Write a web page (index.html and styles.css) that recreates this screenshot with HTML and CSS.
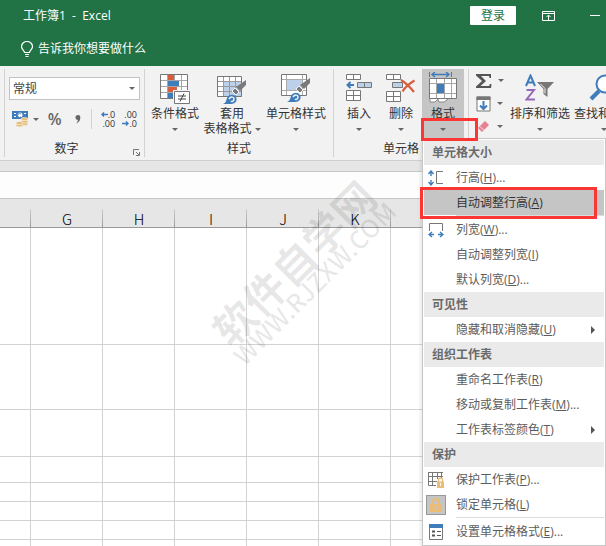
FILE: index.html
```html
<!DOCTYPE html>
<html lang="zh-CN">
<head>
<meta charset="utf-8">
<meta name="viewport" content="width=device-width, initial-scale=1">
<title>工作簿1 - Excel</title>
<link rel="stylesheet" href="styles.css">
</head>
<body>
<svg class="defs" width="0" height="0" aria-hidden="true">
  <symbol id="brush" viewBox="0 0 30 30">
    <path d="M29 6v5l-6 6-4-4z" fill="#7a7a7a"/>
    <path d="M18 14l4 4-3 3-4-4z" fill="#7a7a7a" stroke="#f2f2f2"/>
    <path d="M6 30c3-1 3-3 4-6 2-4 7-4 9-1 2 4-1 7-5 7z" fill="#3f7cba"/>
    <path d="M12 25c2-3 5-2 5 0s-2 3-3 2" fill="none" stroke="#f2f2f2" stroke-width="1.500"/>
  </symbol>
</svg>
<div class="app">
  <header class="top">
    <div class="titlebar">
      <span class="title">工作簿1  -  Excel</span>
      <button class="login" type="button">登录</button>
      <button class="win" type="button" aria-label="功能区显示选项">
        <svg width="13" height="10" viewBox="0 0 13 10" fill="none" stroke="#fff"><path d="M.5.500h12v9H.5zM0 2.500h13M6.500 9V4.500M4.500 6l2-2 2 2"/></svg>
      </button>
      <button class="win" type="button" aria-label="最小化">
        <svg width="10" height="10" viewBox="0 0 10 10" stroke="#fff"><path d="M0 4.500h10"/></svg>
      </button>
    </div>
    <button class="tell" type="button">
      <svg width="12" height="16" viewBox="0 0 12 16" fill="none" stroke="#fff" stroke-width="1.200"><path d="M3.500 11.500c0-2-3-3-3-6a5.500 5 0 0 1 11 0c0 3-3 4-3 6zM4 13.500h4M4.500 15.500h3"/></svg>
      告诉我你想要做什么
    </button>
  </header>

  <div class="ribbon">
    <section class="group number">
      <div class="body">
        <div class="combo">
          <select aria-label="数字格式"><option>常规</option></select>
          <i class="caret"></i>
        </div>
        <div class="tools">
          <button type="button" class="tool money" aria-label="会计数字格式">
            <svg width="16" height="16" viewBox="0 0 16 16"><path d="M0 0h16v8H0z" fill="#3f7cba"/><path d="M2 2h2v1h-2zM12 2h2v1h-2zM2 5h2v1h-2z" fill="#fff"/><circle cx="8" cy="4" r="2.500" fill="#fff"/><path d="M9 3a2 2 0 1 0 0 3" fill="none" stroke="#3f7cba"/><g fill="#e9bd78" stroke="#f2f2f2" stroke-width=".6"><ellipse cx="12.500" cy="13" rx="3.500" ry="1.600"/><ellipse cx="12.500" cy="10.500" rx="3.500" ry="1.600"/><ellipse cx="12.500" cy="8" rx="3.500" ry="1.600"/><ellipse cx="7.500" cy="14.300" rx="3.500" ry="1.600"/><ellipse cx="7.500" cy="12" rx="3.500" ry="1.600"/></g></svg>
            <i class="caret"></i>
          </button>
          <button type="button" class="tool percent">%</button>
          <button type="button" class="tool comma" aria-label="千位分隔样式">
            <svg width="6" height="9" viewBox="0 0 6 9"><path d="M3 0a2.300 2.300 0 0 1 2.300 2.500C5.300 5.500 4 7.500 1 8.500c1-1 1.800-2 1.800-3.500A2.400 2.400 0 0 1 3 0z" fill="#666"/></svg>
          </button>
          <span class="split"></span>
          <button type="button" class="tool decimal" aria-label="增加小数位数">
            <span class="d"><svg width="7" height="5" viewBox="0 0 7 5" fill="none" stroke="#3f7cba" stroke-width="1.500"><path d="M7 2.500H1M3 .5l-2 2 2 2"/></svg>.0</span><span class="d">.00</span>
          </button>
          <button type="button" class="tool decimal" aria-label="减少小数位数">
            <span class="d">.00</span><span class="d"><svg width="7" height="5" viewBox="0 0 7 5" fill="none" stroke="#3f7cba" stroke-width="1.500"><path d="M0 2.500h6M4 .5l2 2-2 2"/></svg>.0</span>
          </button>
        </div>
      </div>
      <h2>数字</h2>
      <button type="button" class="launcher" aria-label="数字设置">
        <svg width="7" height="7" viewBox="0 0 7 7" fill="none" stroke="#777"><path d="M.5 6V.5H6M3 3l3 3M6.500 3v3.500H3"/></svg>
      </button>
    </section>

    <section class="group styles">
      <div class="body">
        <button type="button" class="big">
          <svg width="30" height="30" viewBox="0 0 30 30"><path d="M.5.500h27v24H.5z" fill="#fff"/><path d="M7.500 0v24M14.500 0v24M21.500 0v24M0 6.500h28M0 12.500h28M0 18.500h28" stroke="#a6a6a6"/><path d="M.5.500h27v24H.5z" fill="none" stroke="#777"/><path d="M8 1h6v5H8zM8 13h9v5H8z" fill="#d65f3d"/><path d="M8 7h11v5H8zM8 19h5v5H8z" fill="#3f7cba"/><path d="M13 16h17v14H13z" fill="#f2f2f2"/><path d="M14.500 17.500h15v12h-15z" fill="#fff" stroke="#777"/><path d="M18 22h8M18 25h8M24 19.500l-4 8" stroke="#444" fill="none"/></svg>
          <span>条件格式</span><span><i class="caret"></i></span>
        </button>
        <button type="button" class="big wide">
          <svg width="30" height="30" viewBox="0 0 30 30"><path d="M.5 2.500h24v20H.5z" fill="#fff"/><path d="M7 8h18v15H7z" fill="#bdd0e9"/><path d="M6.500 2v20M12.500 2v20M18.500 2v20M0 7.500h25M0 12.500h25M0 17.500h25" stroke="#999"/><path d="M.5 2.500h24v20H.5z" fill="none" stroke="#777"/><use href="#brush" width="30" height="30"/></svg>
          <span>套用</span><span>表格格式 <i class="caret"></i></span>
        </button>
        <button type="button" class="big wide">
          <svg width="30" height="30" viewBox="0 0 30 30"><path d="M.5.500h25v21H.5z" fill="#fff"/><path d="M6 6h15v10H6z" fill="#bdd0e9"/><path d="M5.500 0v21M21.500 0v21M0 5.500h25M0 16.500h25" stroke="#aaa"/><path d="M.5.500h25v21H.5z" fill="none" stroke="#777"/><use href="#brush" y="-2" width="30" height="30"/></svg>
          <span>单元格样式</span><span><i class="caret"></i></span>
        </button>
      </div>
      <h2>样式</h2>
    </section>

    <section class="group cells">
      <div class="body">
        <button type="button" class="big">
          <svg width="26" height="30" viewBox="0 0 26 30" fill="#fff" stroke="#777"><path d="M.5.500h14v5H.5zM7.500.500v5M.5 16.500h14v10H.5zM7.500 16.500v10M.5 21.500h14"/><path d="M11.500 8.500h14v5h-14zM18.500 8.500v5" fill="#bdd0e9"/><path d="M8 11H2M4.500 8L1.500 11l3 3" fill="none" stroke="#3f7cba" stroke-width="2"/></svg>
          <span>插入</span><span><i class="caret"></i></span>
        </button>
        <button type="button" class="big">
          <svg width="30" height="30" viewBox="0 0 30 30" fill="#fff" stroke="#777"><path d="M.5.500h14v5H.5zM7.500.500v5M.5 17.500h14v10H.5zM7.500 17.500v10M.5 22.500h14"/><path d="M6.500 8.500h10v5h-10z" fill="#bdd0e9"/><path d="M15 6c5 3 9 7 13 12M28.500 6.500c-5 3-9 6-12 11" fill="none" stroke="#d65f3d" stroke-width="2.200"/></svg>
          <span>删除</span><span><i class="caret"></i></span>
        </button>
        <div class="drop">
          <button type="button" class="big open" aria-expanded="true">
            <svg width="28" height="32" viewBox="0 0 28 32"><path d="M.5 0v5M22.500 0v5" stroke="#3f7cba"/><path d="M3 2.500h17M6 0L3 2.500 6 5M17 0l3 2.500L17 5" fill="none" stroke="#3f7cba" stroke-width="1.400"/><path d="M.5 6.500h27v20H.5z" fill="#fff"/><path d="M7.500 6v20M15.500 6v20M22.500 6v20M0 11.500h28M0 21.500h28" stroke="#a6a6a6"/><path d="M.5 6.500h27v20H.5z" fill="none" stroke="#777"/><path d="M8 12h7v9H8z" fill="#3f7cba"/><path d="M1 27v3h5l3-3 1 3h5l4-3" fill="#fff" stroke="#888"/></svg>
            <span>格式</span><span><i class="caret"></i></span>
          </button>
          <div class="menu" role="menu">
            <h3>单元格大小</h3>
            <button type="button" role="menuitem" class="item"><span class="ico"><svg width="16" height="16" viewBox="0 0 16 16" fill="none"><path d="M3 1v5M.5 4L3 1l2.500 3M3 15v-5M.5 12L3 15l2.500-3" stroke="#3f7cba" stroke-width="1.400"/><path d="M15 1.500H8.500v12H15" stroke="#777"/></svg></span>行高(<u>H</u>)...</button>
            <button type="button" role="menuitem" class="item active">自动调整行高(<u>A</u>)<span class="mark mark-row"></span></button>
            <hr>
            <button type="button" role="menuitem" class="item"><span class="ico"><svg width="16" height="16" viewBox="0 0 16 16" fill="none"><path d="M1.500 9V1.500h13V9" stroke="#777"/><path d="M1 12.500h5M4 10l-3 2.500L4 15M15 12.500h-5M12 10l3 2.500-3 2.500" stroke="#3f7cba" stroke-width="1.400"/></svg></span>列宽(<u>W</u>)...</button>
            <button type="button" role="menuitem" class="item">自动调整列宽(<u>I</u>)</button>
            <button type="button" role="menuitem" class="item">默认列宽(<u>D</u>)...</button>
            <h3>可见性</h3>
            <button type="button" role="menuitem" class="item sub">隐藏和取消隐藏(<u>U</u>)</button>
            <h3>组织工作表</h3>
            <button type="button" role="menuitem" class="item">重命名工作表(<u>R</u>)</button>
            <button type="button" role="menuitem" class="item">移动或复制工作表(<u>M</u>)...</button>
            <button type="button" role="menuitem" class="item sub">工作表标签颜色(<u>T</u>)</button>
            <h3>保护</h3>
            <button type="button" role="menuitem" class="item"><span class="ico"><svg width="16" height="16" viewBox="0 0 16 16" fill="none"><path d="M.5 0v13.500H8M4.500 0v13M9.500 0v7M13.500 0v6M0 .5h15M0 4.500h15M0 9.500h9" stroke="#777"/><path d="M10.500 10V8a2 2 0 0 1 4 0v2" stroke="#e9bd78" stroke-width="1.300"/><path d="M9 9.500h7V16H9z" fill="#e9bd78"/><path d="M12.500 11v3" stroke="#fff"/></svg></span>保护工作表(<u>P</u>)...</button>
            <button type="button" role="menuitem" class="item"><span class="ico checked"><svg width="12" height="14" viewBox="0 0 12 14" fill="none"><path d="M3 6V4a3 3 0 0 1 6 0v2" stroke="#e9bd78" stroke-width="2"/><path d="M0 6h12v8H0z" fill="#e9bd78"/><path d="M6 8v3" stroke="#c5c5c5" stroke-width="2"/></svg></span>锁定单元格(<u>L</u>)</button>
            <hr>
            <button type="button" role="menuitem" class="item"><span class="ico"><svg width="14" height="16" viewBox="0 0 14 16" fill="none"><path d="M.5.500h13v15H.5z" fill="#fff" stroke="#777"/><path d="M0 0h14v4H0z" fill="#3f7cba"/><path d="M3 7.500h3M3 11.500h3" stroke="#555" stroke-width="2"/><path d="M8 7.500h4M8 11.500h4" stroke="#555"/></svg></span>设置单元格格式(<u>E</u>)...</button>
          </div>
          <span class="mark mark-arrow"></span>
        </div>
      </div>
      <h2>单元格</h2>
    </section>

    <section class="group editing">
      <div class="body">
        <div class="stack">
          <button type="button" class="small" aria-label="求和"><svg width="16" height="14" viewBox="0 0 16 14"><path d="M0 0h15v4h-1.500L13 2H5l5 5-5.500 5H13l1-2h1.500L15 14H0v-1.500L6 7 0 1.500z" fill="#555"/></svg><i class="caret"></i></button>
          <button type="button" class="small" aria-label="填充"><svg width="15" height="16" viewBox="0 0 15 16" fill="none"><path d="M1 1h13v14H1z" fill="#fff" stroke="#777"/><path d="M.5.500h14V4H.5z" fill="#777"/><path d="M7.500 5v8M4 9.500L7.500 13 11 9.500" stroke="#3f7cba" stroke-width="2"/></svg><i class="caret"></i></button>
          <button type="button" class="small" aria-label="清除"><svg width="15" height="14" viewBox="0 0 15 14"><path d="M9 1l4 4-7 7-4-4z" fill="#e87f92"/><path d="M4 6.500l4 4" stroke="#f2f2f2"/></svg><i class="caret"></i></button>
        </div>
        <button type="button" class="big wide">
          <svg width="30" height="30" viewBox="0 0 30 30" fill="none"><path d="M1 12L5.500 1.500 10 12M2.500 8.500h6" stroke="#3f7cba" stroke-width="2"/><path d="M1.500 16H9L1.500 25.500H10" stroke="#9668b8" stroke-width="2"/><path d="M12 8h17l-6.500 7v8l-4-3v-5z" fill="#777"/><path d="M15.500 10l4.500 4.500v5" stroke="#f2f2f2"/></svg>
          <span>排序和筛选</span><span><i class="caret"></i></span>
        </button>
        <button type="button" class="big wide">
          <svg width="30" height="30" viewBox="0 0 30 30" fill="none" stroke="#3f7cba"><circle cx="16" cy="10" r="8.500" stroke-width="2" fill="#fff"/><path d="M10 17l-8 8" stroke-width="4"/></svg>
          <span>查找和选择</span><span><i class="caret"></i></span>
        </button>
      </div>
      <h2>编辑</h2>
    </section>
  </div>

  <div class="formula"></div>

  <main class="sheet">
    <table class="grid">
      <colgroup><col class="edge"><col><col><col><col><col><col class="rest"></colgroup>
      <thead><tr><th></th><th>G</th><th>H</th><th>I</th><th>J</th><th>K</th><th></th></tr></thead>
      <tbody>
        <tr class="h117"><td></td><td></td><td></td><td></td><td></td><td></td><td></td></tr>
        <tr class="h65"><td></td><td></td><td></td><td></td><td></td><td></td><td></td></tr>
        <tr class="h47"><td></td><td></td><td></td><td></td><td></td><td></td><td></td></tr>
        <tr class="h26"><td></td><td></td><td></td><td></td><td></td><td></td><td></td></tr>
        <tr><td></td><td></td><td></td><td></td><td></td><td></td><td></td></tr>
        <tr><td></td><td></td><td></td><td></td><td></td><td></td><td></td></tr>
        <tr><td></td><td></td><td></td><td></td><td></td><td></td><td></td></tr>
        <tr><td></td><td></td><td></td><td></td><td></td><td></td><td></td></tr>
      </tbody>
    </table>
    <div class="watermark"><b>软件自学网</b><span>WWW.RJZXW.COM</span></div>
  </main>
</div>
</body>
</html>
```
FILE: styles.css
```css
* { box-sizing: border-box; }

body {
  margin: 0;
  font: 12px/16px "Open Sans", "Noto Sans CJK SC", sans-serif;
  color: #333;
  background: #fff;
}

.defs { position: absolute; }

button {
  margin: 0;
  padding: 0;
  border: 0;
  background: none;
  font: inherit;
  color: inherit;
}

svg { flex: none; }

h2, h3 { margin: 0; font: inherit; }

.app { height: 100vh; overflow: hidden; }

/* Title area */
.top { height: 66px; background: #217346; color: #fff; }

.titlebar {
  display: flex;
  align-items: center;
  height: 31px;
  padding: 0 6px 0 23px;
}

.title { flex: 1; white-space: pre; }

.login {
  width: 46px;
  height: 19px;
  margin-right: 26px;
  border-radius: 1px;
  background: #fff;
  color: #217346;
}

.win { display: flex; }
.win + .win { margin-left: 35px; }

.tell {
  display: flex;
  align-items: center;
  gap: 5px;
  height: 36px;
  padding-left: 21px;
}

/* Ribbon */
.ribbon {
  display: flex;
  height: 95px;
  padding: 3px 0 3px 4px;
  background: #f2f2f2;
  border-bottom: 1px solid #cfcfcf;
}

.group {
  position: relative;
  flex: none;
  height: 88px;
  border-right: 1px solid #d2d2d2;
}

.body { display: flex; height: 69px; }

.group h2 { height: 22px; line-height: 22px; text-align: center; }

.number { width: 141px; border-left: 1px solid #d2d2d2; }
.number .body { flex-direction: column; padding: 8px 4px 0; }
.number h2 { padding-right: 16px; }
.styles .body { padding: 0 5px; }
.cells .body { padding: 0 4px; }
.editing .body { padding-left: 5px; }

.caret {
  display: inline-block;
  flex: none;
  border: 3px solid transparent;
  border-top-color: #666;
  border-bottom-width: 0;
  vertical-align: middle;
}

.combo { position: relative; }

.combo select {
  width: 100%;
  height: 23px;
  padding: 0 3px;
  border: 1px solid #c3c3c3;
  border-radius: 0;
  background: #fff;
  font: inherit;
  color: #444;
  appearance: none;
}

.combo .caret { position: absolute; right: 5px; top: 10px; }

.tools { display: flex; align-items: center; height: 34px; padding: 4px 3px 0; }
.tool { display: flex; align-items: center; }
.money { gap: 5px; width: 36px; }
.percent { width: 22px; font-size: 16px; font-weight: 600; color: #666; }
.comma { width: 18px; justify-content: center; }
.split { width: 1px; height: 20px; margin: 0 7px 0 4px; background: #d2d2d2; }
.decimal { flex-direction: column; align-items: flex-end; width: 16px; }
.decimal + .decimal { margin-left: 6px; }
.d { display: flex; align-items: center; font-size: 9px; line-height: 9px; }

.launcher { position: absolute; right: 4px; bottom: 1px; display: flex; }

.big {
  display: flex;
  flex-direction: column;
  align-items: center;
  width: 42px;
  height: 69px;
  padding-top: 5px;
  line-height: 15px;
  white-space: nowrap;
}

.big > svg { margin-bottom: 2px; }
.big > span { height: 15px; }
.styles .big { width: 50px; }
.styles .wide, .big.wide { width: 64px; }
.open { padding-top: 3px; background: #c5c5c5; }

.stack { width: 34px; }
.small { display: flex; align-items: center; gap: 6px; width: 34px; height: 23px; padding-left: 2px; }

/* Drop-down menu */
.drop { position: relative; }

.menu {
  position: absolute;
  z-index: 2;
  top: 100%;
  left: 0;
  width: 184px;
  padding: 1px;
  border: 1px solid #c6c6c6;
  background: #fff;
  box-shadow: -2px 2px 3px rgba(0, 0, 0, .08);
  color: #5c5c5c;
}

.menu h3 {
  height: 25px;
  padding-left: 8px;
  line-height: 25px;
  font-weight: 700;
  color: #6a6a6a;
  background: #eaeaea;
}

.item {
  position: relative;
  display: flex;
  align-items: center;
  width: 100%;
  height: 25px;
  padding-left: 32px;
}

.item.active { background: #c5c5c5; color: #333; }

.item.sub::after {
  content: "";
  margin-left: auto;
  margin-right: 9px;
  border: 4px solid transparent;
  border-left-color: #555;
  border-right-width: 0;
}

.ico { display: flex; justify-content: center; align-items: center; width: 20px; height: 20px; margin: 0 10px 0 -30px; }
.checked { border: 1px solid #999; background: #c5c5c5; }

.menu hr { height: 1px; margin: 0 0 1px 32px; border: 0; background: #dcdcdc; }

.mark { position: absolute; z-index: 3; border: 3px solid #fc3535; }
.mark-row { inset: -3px 7px -4px -4px; }
.mark-arrow { left: -1px; bottom: -3px; width: 57px; height: 23px; }

/* Worksheet */
.formula {
  height: 38px;
  border-top: 10px solid #e6e6e6;
  border-bottom: 1px solid #c6c6c6;
  background: linear-gradient(#c6c6c6 1px, #fdfdfd 1px);
}

.sheet { position: relative; }

.grid { width: 100%; table-layout: fixed; border-spacing: 0; }
.grid col { width: 72px; }
.grid .edge { width: 31px; }
.grid .rest { width: auto; }

.grid th {
  height: 29px;
  padding: 12px 0 0;
  border-bottom: 1px solid #999;
  background: linear-gradient(#d0d0d0, #999) right bottom / 1px 18px no-repeat #e6e6e6;
  font: 300 15px/16px "Noto Sans CJK SC", sans-serif;
  color: #000;
}

.grid td {
  height: 19px;
  padding: 0;
  border-right: 1px solid #d2d2d2;
  border-bottom: 1px solid #d2d2d2;
}

.h117 td { height: 117px; }
.h65 td { height: 65px; }
.h47 td { height: 47px; }
.h26 td { height: 26px; }

.watermark {
  position: absolute;
  left: 303px;
  top: 73px;
  transform: translate(-50%, -50%) rotate(-45deg);
  color: rgba(0, 0, 0, .09);
  text-align: center;
  white-space: nowrap;
  font-family: "Noto Sans CJK SC", sans-serif;
  pointer-events: none;
}

.watermark b, .watermark span { display: block; }
.watermark b { font-size: 42px; line-height: 30px; }
.watermark span { font-size: 25px; font-weight: 500; line-height: 28px; }
```
